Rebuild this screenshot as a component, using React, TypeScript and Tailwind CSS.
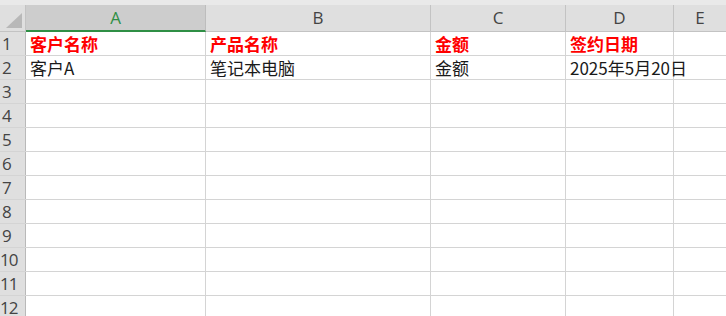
import React from "react";

const cols = [
  { key: "A", width: "w-[180px]" },
  { key: "B", width: "w-[225px]" },
  { key: "C", width: "w-[135px]" },
  { key: "D", width: "w-[108px]" },
  { key: "E", width: "flex-1" },
];

const rows: string[][] = [
  ["客户名称", "产品名称", "金额", "签约日期", ""],
  ["客户A", "笔记本电脑", "金额", "2025年5月20日", ""],
];

const cellFont = { fontFamily: '"Noto Sans CJK SC", "Liberation Serif", serif' };
const headFont = { fontFamily: '"Open Sans", "Liberation Sans", sans-serif' };

export default function App() {
  return (
    <div className="w-[726px] h-[316px] overflow-hidden bg-white select-none">
      {/* top strip */}
      <div className="h-[5px] bg-[#e9e9e9]" />

      {/* column headers */}
      <div className="flex h-[27px] bg-[#dfdfdf] border-b border-[#c3c3c3]" style={headFont}>
        <div className="w-[26px] shrink-0 border-r border-[#c3c3c3] relative">
          <svg className="absolute left-[6px] top-[8px]" width="17" height="16" viewBox="0 0 17 16">
            <polygon points="16,0 16,15 0,15" fill="#b8b8b8" />
          </svg>
        </div>
        {cols.map((c) =>
          c.key === "A" ? (
            <div
              key={c.key}
              className={`${c.width} shrink-0 bg-[#cdcdcd] border-r border-[#bdbdbd] border-b-2 border-b-[#2f8f45] -mb-px flex items-center justify-center text-[17px] text-[#2f8f45]`}
            >
              {c.key}
            </div>
          ) : (
            <div
              key={c.key}
              className={`${c.width} ${c.key === "E" ? "" : "shrink-0 border-r border-[#c3c3c3]"} flex items-center justify-center text-[17px] text-[#444]`}
            >
              {c.key}
            </div>
          )
        )}
      </div>

      {/* body */}
      {Array.from({ length: 12 }, (_, i) => {
        const data = rows[i];
        const n = i + 1;
        return (
          <div key={n} className="flex h-[24px] border-b border-[#d4d4d4]">
            <div
              className={`w-[26px] shrink-0 bg-[#dfdfdf] border-r border-[#b9b9b9] flex items-center text-[17px] text-[#444] ${n < 10 ? "pl-[2px]" : "pl-0 tracking-[-1px]"}`}
              style={headFont}
            >
              {n}
            </div>
            {cols.map((c, j) => (
              <div
                key={c.key}
                className={`${c.width} ${c.key === "E" ? "" : "shrink-0 border-r border-[#d4d4d4]"} flex items-center pl-[4px] whitespace-nowrap overflow-visible relative ${i === 0 ? "text-[#ff0000] font-bold" : "text-[#1a1a1a]"} text-[17px] leading-none`}
                style={cellFont}
              >
                {data ? <span className="relative z-10">{data[j]}</span> : null}
              </div>
            ))}
          </div>
        );
      })}
    </div>
  );
}
